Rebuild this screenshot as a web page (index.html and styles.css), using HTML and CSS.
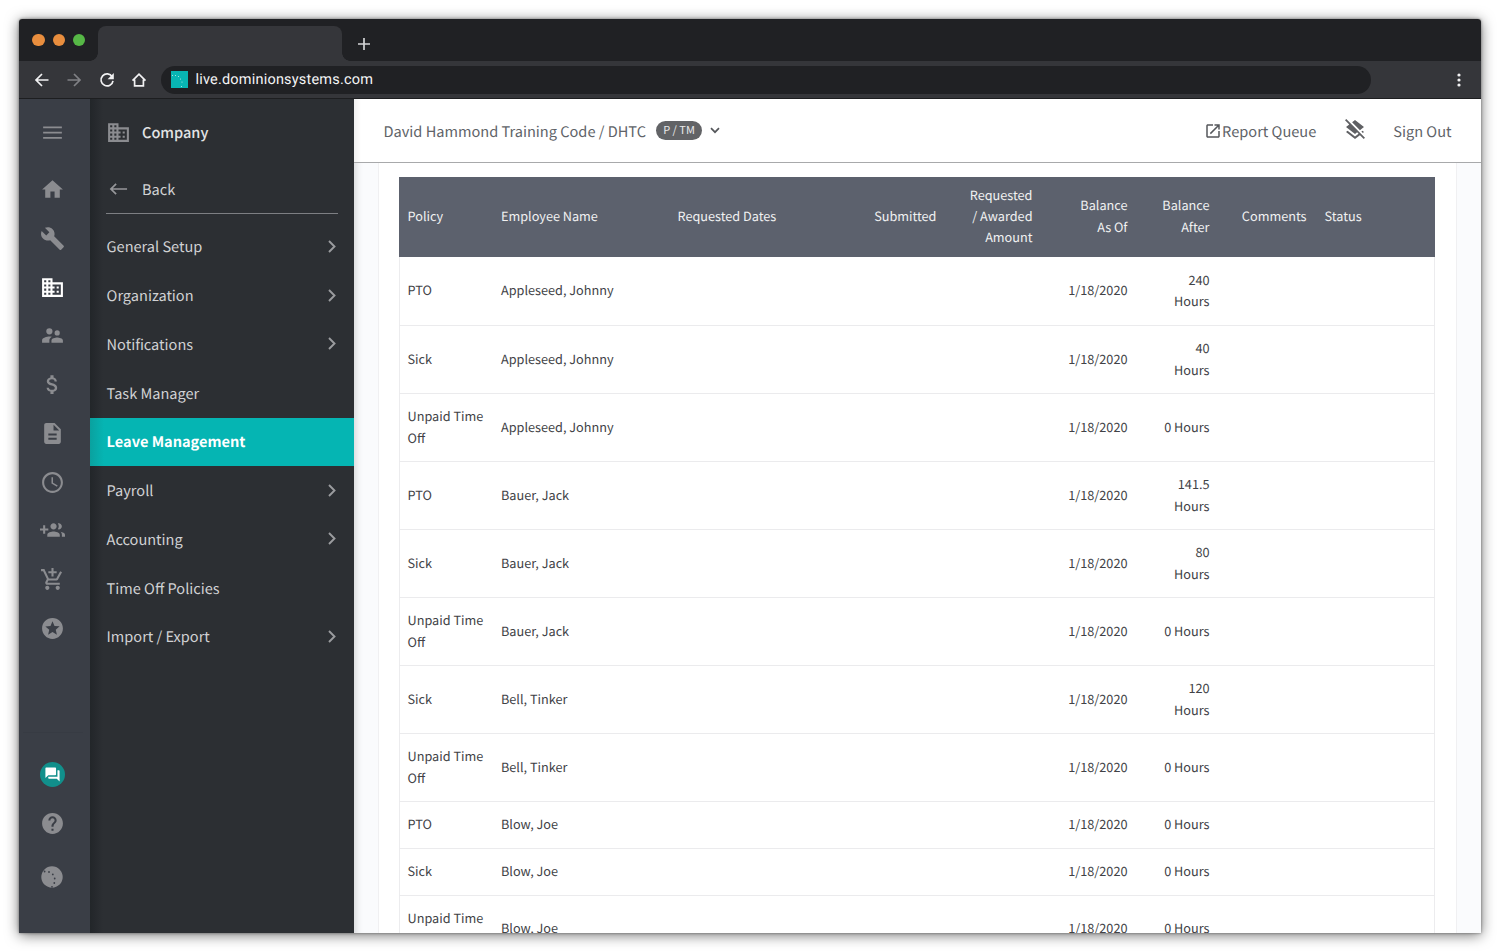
FILE: index.html
```html
<!DOCTYPE html>
<html lang="en">
<head>
<meta charset="utf-8">
<title>Leave Management</title>
<link rel="stylesheet" href="styles.css">
</head>
<body>
<div class="window">
  <div class="tabbar">
    <div class="lights"><i class="light"></i><i class="light"></i><i class="light green"></i></div>
    <div class="tab"></div>
    <svg class="plus" viewBox="0 0 14 14"><path d="M7 1v12M1 7h12"/></svg>
  </div>
  <div class="toolbar">
    <svg class="tool" viewBox="0 0 16 16"><path d="M14.5 8H2M8 2L2 8l6 6"/></svg>
    <svg class="tool dim" viewBox="0 0 16 16"><path d="M1.500 8H14M8 2l6 6-6 6"/></svg>
    <svg class="tool" viewBox="0 0 16 16"><path d="M13.200 4.800A6 6 0 1 0 14 8.800"/><path class="solid" d="M14.800 1v6.200H8.600z"/></svg>
    <svg class="tool" viewBox="0 0 16 16"><path d="M1.500 8.600L8 2.200l6.500 6.400M3.600 7.500v6.400h8.800V7.500"/></svg>
    <div class="url">
      <svg class="favicon" viewBox="0 0 17 17"><path fill="#08b5b3" d="M0 0h17v17H0z"/><g fill="#d4f3f1"><circle cx="1.500" cy="4.500" r=".5"/><circle cx="4.500" cy="4.600" r=".5"/><circle cx="7.500" cy="5.500" r=".5"/><circle cx="9.500" cy="8" r=".5"/><circle cx="11" cy="11" r=".5"/><circle cx="10.500" cy="15.500" r=".5"/></g></svg>
      <span>live.dominionsystems.com</span>
    </div>
    <svg class="kebab" viewBox="0 0 4 16"><circle cx="2" cy="3" r="1.600"/><circle cx="2" cy="8" r="1.600"/><circle cx="2" cy="13" r="1.600"/></svg>
  </div>
  <div class="app">
    <nav class="rail">
      <svg class="icon menu" viewBox="0 0 24 24"><path d="M3 18h18v-1.800H3zm0-5h18v-1.800H3zM3 6.200V8h18V6.200z"/></svg>
      <svg class="icon" viewBox="0 0 24 24"><path d="M10 20v-6h4v6h5v-8h3L12 3 2 12h3v8z"/></svg>
      <svg class="icon" viewBox="0 0 24 24"><path d="M22.700 19l-9.100-9.100c.9-2.300.4-5-1.500-6.900-2-2-5-2.400-7.400-1.300L9 6 6 9 1.600 4.700C.4 7.100.9 10.100 2.900 12.100c1.900 1.900 4.600 2.400 6.900 1.500l9.100 9.100c.4.4 1 .4 1.400 0l2.300-2.300c.5-.4.5-1.100.1-1.400z"/></svg>
      <svg class="icon current" viewBox="0 0 24 24"><path d="M12 7V3H2v18h20V7H12zM6 19H4v-2h2v2zm0-4H4v-2h2v2zm0-4H4V9h2v2zm0-4H4V5h2v2zm4 12H8v-2h2v2zm0-4H8v-2h2v2zm0-4H8V9h2v2zm0-4H8V5h2v2zm10 12h-8v-2h2v-2h-2v-2h2v-2h-2V9h8v10zm-2-8h-2v2h2v-2zm0 4h-2v2h2v-2z"/></svg>
      <svg class="icon" viewBox="0 0 24 24"><path d="M16.500 12a2.500 2.500 0 1 0 0-5 2.500 2.500 0 0 0 0 5zM9 11a3 3 0 1 0 0-6 3 3 0 0 0 0 6zm7.500 3c-1.830 0-5.500.92-5.500 2.750V19h11v-2.250c0-1.830-3.670-2.750-5.500-2.750zM9 13c-2.330 0-7 1.170-7 3.500V19h7v-2.250c0-.85.33-2.340 2.370-3.470C10.500 13.100 9.660 13 9 13z"/></svg>
      <svg class="icon" viewBox="0 0 24 24"><path d="M11.800 10.900c-2.270-.59-3-1.200-3-2.150 0-1.090 1.010-1.850 2.700-1.850 1.780 0 2.440.85 2.500 2.100h2.210c-.07-1.720-1.120-3.300-3.210-3.810V3h-3v2.160c-1.940.42-3.500 1.680-3.500 3.610 0 2.310 1.910 3.460 4.700 4.130 2.500.6 3 1.480 3 2.410 0 .69-.49 1.790-2.700 1.790-2.060 0-2.870-.92-2.980-2.100h-2.200c.12 2.190 1.760 3.420 3.680 3.830V21h3v-2.150c1.950-.37 3.500-1.500 3.500-3.550 0-2.840-2.430-3.810-4.700-4.400z"/></svg>
      <svg class="icon" viewBox="0 0 24 24"><path d="M14 2H6c-1.100 0-1.990.9-1.990 2L4 20c0 1.100.89 2 1.990 2H18c1.100 0 2-.9 2-2V8l-6-6zm2 16H8v-2h8v2zm0-4H8v-2h8v2zm-3-5V3.500L18.500 9H13z"/></svg>
      <svg class="icon" viewBox="0 0 24 24"><path d="M11.990 2C6.470 2 2 6.480 2 12s4.470 10 9.990 10C17.520 22 22 17.520 22 12S17.520 2 11.990 2zM12 20c-4.420 0-8-3.580-8-8s3.580-8 8-8 8 3.580 8 8-3.580 8-8 8zm.5-13H11v6l5.250 3.150.75-1.230-4.500-2.670z"/></svg>
      <svg class="icon" viewBox="0 0 24 24"><path d="M8 10H5V7H3v3H0v2h3v3h2v-3h3v-2zm10 1c1.660 0 2.990-1.340 2.990-3S19.660 5 18 5c-.32 0-.63.05-.91.140.57.810.9 1.790.9 2.860s-.34 2.040-.9 2.860c.28.090.590.140.910.140zm-5 0c1.660 0 2.990-1.340 2.990-3S14.660 5 13 5s-3 1.340-3 3 1.340 3 3 3zm6.620 2.160c.83.73 1.380 1.660 1.380 2.840v2h3v-2c0-1.540-2.370-2.490-4.380-2.840zM13 13c-2 0-6 1-6 3v2h12v-2c0-2-4-3-6-3z"/></svg>
      <svg class="icon" viewBox="0 0 24 24"><path d="M11 9h2V6h3V4h-3V1h-2v3H8v2h3v3zm-4 9c-1.100 0-1.990.9-1.990 2S5.900 22 7 22s2-.9 2-2-.9-2-2-2zm10 0c-1.100 0-1.990.9-1.990 2s.89 2 1.990 2 2-.9 2-2-.9-2-2-2zm-9.830-3.250l.03-.12.9-1.630h7.450c.75 0 1.410-.41 1.750-1.030l3.860-7.010L19.420 4h-.01l-1.100 2-2.760 5H8.530l-.13-.27L6.160 6l-.95-2-.94-2H1v2h2l3.600 7.590-1.350 2.450c-.16.28-.25.61-.25.960 0 1.100.9 2 2 2h12v-2H7.420c-.13 0-.25-.11-.25-.25z"/></svg>
      <svg class="icon" viewBox="0 0 24 24"><path d="M11.990 2C6.470 2 2 6.480 2 12s4.470 10 9.990 10C17.520 22 22 17.520 22 12S17.520 2 11.990 2zm4.240 16L12 15.450 7.770 18l1.120-4.810-3.730-3.230 4.920-.42L12 5l1.920 4.530 4.920.42-3.730 3.230L16.230 18z"/></svg>
      <div class="rail-foot">
        <span class="chat"><svg viewBox="0 0 24 24"><path d="M21 6h-2v9H6v2c0 .55.450 1 1 1h11l4 4V7c0-.55-.45-1-1-1zm-4 6V3c0-.55-.45-1-1-1H3c-.55 0-1 .45-1 1v14l4-4h10c.55 0 1-.45 1-1z"/></svg></span>
        <svg class="icon" viewBox="0 0 24 24"><path d="M12 2C6.480 2 2 6.480 2 12s4.480 10 10 10 10-4.480 10-10S17.520 2 12 2zm1 17h-2v-2h2v2zm2.070-7.750l-.9.920C13.450 12.900 13 13.500 13 15h-2v-.5c0-1.100.45-2.100 1.170-2.830l1.240-1.260c.37-.36.590-.86.590-1.410 0-1.100-.9-2-2-2s-2 .9-2 2H8c0-2.210 1.790-4 4-4s4 1.790 4 4c0 .88-.36 1.680-.93 2.250z"/></svg>
        <svg class="moon" viewBox="0 0 22 22"><circle cx="11" cy="11" r="10.700" fill="#8b8c90"/><g fill="#3a3e46"><circle cx="3.600" cy="5.500" r=".9"/><circle cx="8" cy="6" r=".9"/><circle cx="11.800" cy="8.400" r=".9"/><circle cx="13.700" cy="12.500" r=".9"/><circle cx="13.300" cy="17" r=".9"/><circle cx="11" cy="20.800" r=".9"/></g></svg>
      </div>
    </nav>
    <aside class="side">
      <div class="side-title"><svg class="icon" viewBox="0 0 24 24"><path d="M12 7V3H2v18h20V7H12zM6 19H4v-2h2v2zm0-4H4v-2h2v2zm0-4H4V9h2v2zm0-4H4V5h2v2zm4 12H8v-2h2v2zm0-4H8v-2h2v2zm0-4H8V9h2v2zm0-4H8V5h2v2zm10 12h-8v-2h2v-2h-2v-2h2v-2h-2V9h8v10zm-2-8h-2v2h2v-2zm0 4h-2v2h2v-2z"/></svg><span>Company</span></div>
      <div class="side-back"><svg class="back-arrow" viewBox="0 0 20 14"><path d="M19 7H2M7.500 1.500L2 7l5.500 5.500"/></svg><span>Back</span></div>
      <ul class="side-list">
        <li>General Setup<svg class="chev" viewBox="0 0 8 13"><path d="M1 1l5.500 5.500L1 12"/></svg></li>
        <li>Organization<svg class="chev" viewBox="0 0 8 13"><path d="M1 1l5.500 5.500L1 12"/></svg></li>
        <li>Notifications<svg class="chev" viewBox="0 0 8 13"><path d="M1 1l5.500 5.500L1 12"/></svg></li>
        <li>Task Manager</li>
        <li class="active">Leave Management</li>
        <li>Payroll<svg class="chev" viewBox="0 0 8 13"><path d="M1 1l5.500 5.500L1 12"/></svg></li>
        <li>Accounting<svg class="chev" viewBox="0 0 8 13"><path d="M1 1l5.500 5.500L1 12"/></svg></li>
        <li>Time Off Policies</li>
        <li>Import / Export<svg class="chev" viewBox="0 0 8 13"><path d="M1 1l5.500 5.500L1 12"/></svg></li>
      </ul>
    </aside>
    <main class="main">
      <header class="topbar">
        <span class="company">David Hammond Training Code / DHTC</span>
        <span class="pill">P / TM</span>
        <svg class="down" viewBox="0 0 10 7"><path d="M1 1.200l4 4 4-4"/></svg>
        <span class="queue"><svg viewBox="0 0 24 24"><path d="M19 19H5V5h7V3H5c-1.110 0-2 .9-2 2v14c0 1.100.89 2 2 2h14c1.100 0 2-.9 2-2v-7h-2v7zM14 3v2h3.590l-9.830 9.830 1.410 1.410L19 6.410V10h2V3h-7z"/></svg><span class="label">Report Queue</span></span>
        <svg class="layers" viewBox="0 0 24 24"><path d="M19.810 14.990l1.190-.92-1.430-1.430-1.190.92 1.430 1.430zm-.45-4.720L21 9l-9-7-2.910 2.270 7.870 7.880 2.400-1.880zM3.270 1L2 2.270l4.220 4.220L3 9l1.630 1.270L12 16l2.100-1.630 1.430 1.430L12 18.540l-7.370-5.730L3 14.070l9 7 4.950-3.850L20.730 21 22 19.730 3.270 1z"/></svg>
        <span class="label">Sign Out</span>
      </header>
      <div class="content">
        <div class="card">
          <table class="grid">
            <colgroup><col class="c1"><col class="c2"><col class="c3"><col class="c4"><col class="c5"><col class="c6"><col class="c7"><col class="c8"><col class="c9"></colgroup>
            <thead><tr><th>Policy</th><th>Employee Name</th><th>Requested Dates</th><th class="r">Submitted</th><th class="r">Requested<br>/ Awarded<br>Amount</th><th class="r">Balance<br>As Of</th><th class="r">Balance<br>After</th><th class="r">Comments</th><th class="status">Status</th></tr></thead>
            <tbody>
              <tr class="first"><td>PTO</td><td>Appleseed, Johnny</td><td></td><td></td><td></td><td class="r">1/18/2020</td><td class="r">240<br>Hours</td><td></td><td></td></tr>
              <tr><td>Sick</td><td>Appleseed, Johnny</td><td></td><td></td><td></td><td class="r">1/18/2020</td><td class="r">40<br>Hours</td><td></td><td></td></tr>
              <tr><td>Unpaid Time<br>Off</td><td>Appleseed, Johnny</td><td></td><td></td><td></td><td class="r">1/18/2020</td><td class="r">0 Hours</td><td></td><td></td></tr>
              <tr><td>PTO</td><td>Bauer, Jack</td><td></td><td></td><td></td><td class="r">1/18/2020</td><td class="r">141.5<br>Hours</td><td></td><td></td></tr>
              <tr><td>Sick</td><td>Bauer, Jack</td><td></td><td></td><td></td><td class="r">1/18/2020</td><td class="r">80<br>Hours</td><td></td><td></td></tr>
              <tr><td>Unpaid Time<br>Off</td><td>Bauer, Jack</td><td></td><td></td><td></td><td class="r">1/18/2020</td><td class="r">0 Hours</td><td></td><td></td></tr>
              <tr><td>Sick</td><td>Bell, Tinker</td><td></td><td></td><td></td><td class="r">1/18/2020</td><td class="r">120<br>Hours</td><td></td><td></td></tr>
              <tr><td>Unpaid Time<br>Off</td><td>Bell, Tinker</td><td></td><td></td><td></td><td class="r">1/18/2020</td><td class="r">0 Hours</td><td></td><td></td></tr>
              <tr class="short"><td>PTO</td><td>Blow, Joe</td><td></td><td></td><td></td><td class="r">1/18/2020</td><td class="r">0 Hours</td><td></td><td></td></tr>
              <tr class="short"><td>Sick</td><td>Blow, Joe</td><td></td><td></td><td></td><td class="r">1/18/2020</td><td class="r">0 Hours</td><td></td><td></td></tr>
              <tr><td>Unpaid Time<br>Off</td><td>Blow, Joe</td><td></td><td></td><td></td><td class="r">1/18/2020</td><td class="r">0 Hours</td><td></td><td></td></tr>
            </tbody>
          </table>
        </div>
      </div>
    </main>
  </div>
</div>
</body>
</html>
```
FILE: styles.css
```css
* { box-sizing: border-box; }
html, body { height: 100%; overflow: hidden; }
body { margin: 0; padding: 19px 19px 19px; background: #fff; font-family: "Noto Sans CJK SC", "Noto Sans", sans-serif; text-rendering: geometricPrecision; }
svg { display: block; flex: none; }
.window { width: 1462px; height: 914px; display: flex; flex-direction: column; overflow: hidden; border-radius: 3px 3px 0 0; box-shadow: 0 2px 14px rgba(0,0,0,.55), 0 0 3px rgba(0,0,0,.45); }

.tabbar { height: 42px; background: #202124; display: flex; flex: none; }
.lights { width: 79px; padding: 15px 0 0 13.300px; display: flex; gap: 8px; }
.light { width: 12.300px; height: 12.300px; border-radius: 50%; background: #e98e3e; }
.light.green { background: #56b846; }
.tab { position: relative; width: 244px; height: 35px; margin-top: 7px; background: #35363a; border-radius: 8px 8px 0 0; }
.tab::before, .tab::after { content: ""; position: absolute; bottom: 0; width: 8px; height: 8px; }
.tab::before { left: -8px; background: radial-gradient(circle at 0 0, #202124 7.500px, #35363a 8px); }
.tab::after { right: -8px; background: radial-gradient(circle at 100% 0, #202124 7.500px, #35363a 8px); }
.plus { width: 14px; height: 14px; margin: 17.500px 0 0 15px; stroke: #d3d4d6; stroke-width: 1.700; }

.toolbar { height: 38px; flex: none; background: #35363a; border-bottom: 1.500px solid #1d1e20; display: flex; align-items: center; padding: 0 20.500px 0 14.500px; }
.tool { width: 16px; height: 16px; margin-right: 16.500px; fill: none; stroke: #f1f1f2; stroke-width: 1.700; }
.tool.dim { stroke: #808185; }
.tool .solid { fill: #f1f1f2; stroke: none; }
.url { width: 1210px; height: 28px; margin-left: -2.500px; border-radius: 14px; background: #202124; display: flex; align-items: center; padding-left: 10px; gap: 7.500px; color: #f4f4f5; font: 14.500px/28px Roboto, sans-serif; letter-spacing: .2px; }
.favicon { width: 17px; height: 17px; }
.kebab { width: 4px; height: 16px; margin-left: auto; fill: #f1f1f2; }

.app { flex: 1; min-height: 0; display: flex; }
.icon { width: 25px; height: 25px; fill: #8b8c90; }
.rail { width: 71px; background: #3a3e46; display: flex; flex-direction: column; align-items: center; gap: 23.750px; padding: 78px 4px 0 0; }
.rail .menu { width: 25px; height: 25px; margin: -57px 0 8.300px; }
.icon.current { fill: #fff; }
.rail-foot { width: 60px; margin-top: 67.500px; padding-top: 29px; border-top: 1px solid #373b43; display: flex; flex-direction: column; align-items: center; gap: 23.700px; }
.chat { width: 25px; height: 25px; border-radius: 50%; background: #118f8b; display: grid; place-items: center; }
.chat svg { width: 17px; height: 17px; fill: #fff; }
.moon { width: 22px; height: 22px; margin: 7px 2px 0 0; }

.side { width: 264px; background: linear-gradient(90deg, #222629, #26292d 5px, #2c2f33 13px); color: #d1d2d4; font-size: 14.550px; }
.side-title { height: 66px; padding-left: 16px; display: flex; align-items: center; gap: 11px; font-weight: 500; color: #e3e4e5; }
.side-back { height: 49px; margin: 0 16px 8.500px; padding: 0 0 0 3px; border-bottom: 1.500px solid #7d7f83; display: flex; align-items: center; gap: 14px; }
.back-arrow { width: 19px; height: 14px; fill: none; stroke: #96979a; stroke-width: 1.800; }
.side-list { list-style: none; margin: 0; padding: 0; }
.side-list li { height: 48.750px; padding: 0 18px 0 16.600px; display: flex; align-items: center; justify-content: space-between; }
.side-list .active { background: linear-gradient(90deg, #0aa19f, #05b5b3 14px); color: #fff; font-weight: 700; }
.chev { width: 8px; height: 13px; margin-bottom: 1px; fill: none; stroke: #9b9c9f; stroke-width: 1.900; }

.main { flex: 1; min-width: 0; display: flex; flex-direction: column; background: #fafbfd; box-shadow: inset 8px 0 7px -6px rgba(0,0,0,.15); }
.topbar { height: 64px; flex: none; background: linear-gradient(90deg, #f1f1f1, #fff 7px); border-bottom: 1.500px solid #a8a9ab; display: flex; align-items: center; padding: 0 29.500px; color: #606368; font-size: 14.580px; white-space: nowrap; }
.company { width: 262px; padding-top: 1px; }
.label { padding-top: 1px; }
.pill { width: 46px; height: 19px; margin: -1px 8px 0 10.500px; border-radius: 10px; background: #626366; color: #e9e9ea; font-size: 11px; line-height: 18px; text-align: center; }
.down { width: 10px; height: 7px; margin-left: -.5px; fill: none; stroke: #55575b; stroke-width: 1.700; }
.queue { margin-left: auto; display: flex; align-items: center; }
.queue svg { width: 18px; height: 18px; fill: #55575b; }
.layers { width: 24px; height: 24px; margin: -1px 26.500px 0 26.500px; fill: #606164; }
.content { flex: 1; min-height: 0; overflow: hidden; padding: 0 24px 0 24px; }
.card { height: 900px; padding: 14px 20px 0 20px; background: #fff; border: solid #f0f0f2; border-width: 0 1px; }

.grid { width: 1036px; table-layout: fixed; border-collapse: separate; border-spacing: 0; font-size: 12.700px; line-height: 21.250px; color: #414246; white-space: nowrap; }
.c1 { width: 94px; } .c2 { width: 176.500px; } .c3 { width: 196px; } .c4 { width: 79px; } .c5 { width: 96px; }
.c6 { width: 95px; } .c7 { width: 82px; } .c8 { width: 97px; } .c9 { width: 120.500px; }
.grid th { height: 80px; padding: 0 8px 3px; background: #5c616d; color: #f1f1f2; font-weight: 400; text-align: left; }
.grid td { height: 68px; padding: 0 8px 2px; border-bottom: 1px solid #ebebed; }
.grid .first td { height: 69px; }
.grid .short td { height: 46.750px; }
.grid th:first-child, .grid td:first-child { padding-left: 8.500px; }
.grid td:first-child { border-left: 1px solid #ececee; padding-left: 7.500px; }
.grid td:last-child { border-right: 1px solid #ececee; }
.grid .r { text-align: right; }
.grid .status { padding-left: 10px; }
```
